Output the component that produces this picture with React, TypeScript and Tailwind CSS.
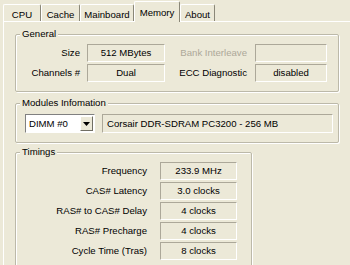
import type { ReactNode } from 'react'

function Tab({ label, className, active }: { label: string; className: string; active?: boolean }) {
  if (active) {
    return (
      <div
        className={`relative -mb-px h-[21px] flex justify-center pt-[6px] bg-[#ece9d8] border-t border-l border-white border-r border-r-[#8a8778] rounded-t-[2px] ${className}`}
      >
        {label}
      </div>
    )
  }
  return (
    <div
      className={`h-[17px] flex justify-center pt-[5px] border-t border-l border-white border-r border-r-[#8a8778] rounded-t-[2px] ${className}`}
    >
      {label}
    </div>
  )
}

function GroupBox({ title, className, children }: { title: string; className: string; children: ReactNode }) {
  return (
    <div
      className={`border border-[#bcb9a9] rounded-[2px] shadow-[inset_1px_1px_0_#fff,1px_1px_0_#fff] ${className}`}
    >
      <div className="-mt-[8px] ml-[4px] w-fit px-[2px] leading-[14px] bg-[#ece9d8]">{title}</div>
      {children}
    </div>
  )
}

function Value({ children, className }: { children?: ReactNode; className: string }) {
  return (
    <div
      className={`h-[18px] flex items-center justify-center border border-t-[#aca899] border-l-[#aca899] border-b-white border-r-white ${className}`}
    >
      {children}
    </div>
  )
}

const timings = [
  ['Frequency', '233.9 MHz'],
  ['CAS# Latency', '3.0 clocks'],
  ['RAS# to CAS# Delay', '4 clocks'],
  ['RAS# Precharge', '4 clocks'],
  ['Cycle Time (Tras)', '8 clocks'],
]

export default function App() {
  return (
    <div className="w-[350px] h-[265px] overflow-hidden bg-[#ece9d8] text-[9.6px] leading-none text-black font-['Liberation_Sans',Arial,sans-serif]">
      <div className="ml-[3px] h-[22px] flex items-end border-b border-white">
        <Tab label="CPU" className="w-[38px]" />
        <Tab label="Cache" className="w-[39px]" />
        <Tab label="Mainboard" className="w-[54px]" />
        <Tab label="Memory" className="w-[46px]" active />
        <Tab label="About" className="w-[35px]" />
      </div>

      <div className="ml-[3px] h-[300px] border-l border-white pl-[11px] pt-[12px]">
        <GroupBox title="General" className="w-[324px] pb-[9px]">
          <div className="mt-[3px] flex flex-col gap-[2px]">
            <div className="flex items-center">
              <div className="w-[64px] text-right">Size</div>
              <Value className="ml-[7px] w-[78px]">512 MBytes</Value>
              <div className="w-[82px] text-right text-[#aca899]">Bank Interleave</div>
              <Value className="ml-[8px] w-[72px]" />
            </div>
            <div className="flex items-center">
              <div className="w-[64px] text-right">Channels #</div>
              <Value className="ml-[7px] w-[78px]">Dual</Value>
              <div className="w-[82px] text-right">ECC Diagnostic</div>
              <Value className="ml-[8px] w-[72px]">disabled</Value>
            </div>
          </div>
        </GroupBox>

        <GroupBox title="Modules Infomation" className="mt-[11px] w-[324px] pb-[9px]">
          <div className="mt-[4px] pl-[9px] flex items-center">
            <div className="w-[70px] h-[19px] flex border border-t-[#808080] border-l-[#808080] border-b-white border-r-white bg-white">
              <div className="flex-1 flex items-center pl-[3px]">DIMM #0</div>
              <div className="w-[13px] m-[1px] flex items-center justify-center bg-[#ece9d8] border border-t-white border-l-white border-b-[#716f64] border-r-[#716f64]">
                <svg width="7" height="4" viewBox="0 0 7 4">
                  <path d="M0 0h7L3.5 4z" fill="#000" />
                </svg>
              </div>
            </div>
            <div className="ml-[7px] w-[231px] h-[19px] flex items-center pl-[4px] border border-t-[#aca899] border-l-[#aca899] border-b-white border-r-white">
              Corsair DDR-SDRAM PC3200 - 256 MB
            </div>
          </div>
        </GroupBox>

        <GroupBox title="Timings" className="mt-[9px] w-[237px] pb-[9px]">
          <div className="mt-[3px] flex flex-col gap-[2px]">
            {timings.map(([label, value]) => (
              <div key={label} className="flex items-center">
                <div className="w-[131px] text-right">{label}</div>
                <Value className="ml-[13px] w-[77px]">{value}</Value>
              </div>
            ))}
          </div>
        </GroupBox>
      </div>
    </div>
  )
}
